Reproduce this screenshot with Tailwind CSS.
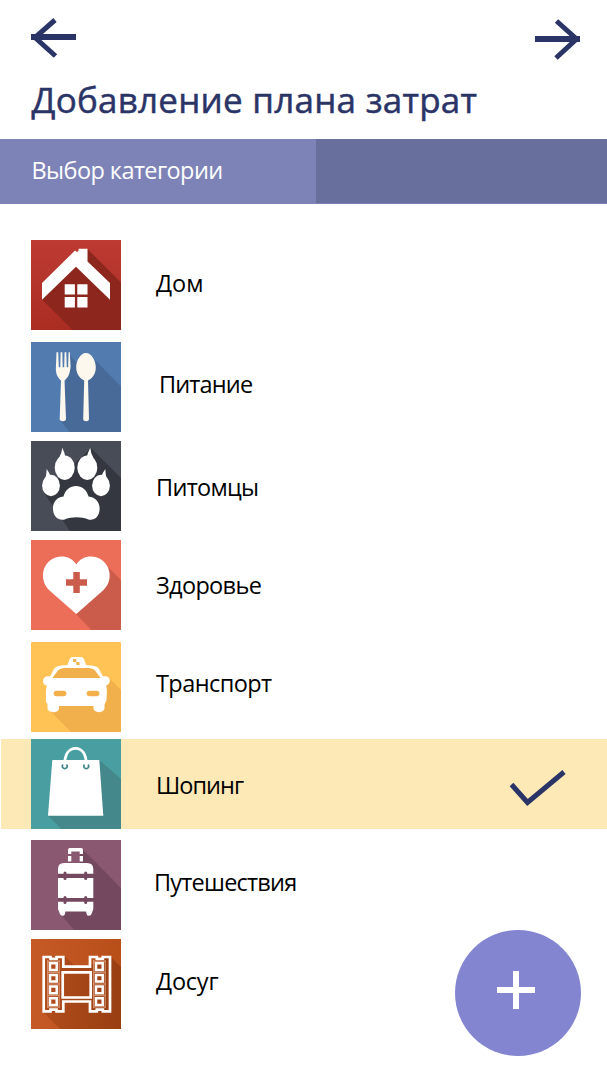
<!DOCTYPE html>
<html lang="ru">
<head>
<meta charset="utf-8">
<title>Добавление плана затрат</title>
<script src="https://cdn.jsdelivr.net/npm/@tailwindcss/browser@4"></script>
</head>
<body class="relative h-[1080px] w-[607px] overflow-hidden bg-white font-['Open_Sans','Noto_Sans',sans-serif] text-black">
<header class="flex h-[139px] flex-col">
  <div class="flex justify-between pl-[31px] pr-[27px] pt-[16px]">
    <svg class="h-12 w-[45px]" viewBox="0 0 45 48" fill="none" stroke="#2b3467"><path d="M0 21H45" stroke-width="6"/><path d="M24 4 4 21.500 24.500 40" stroke-width="5"/></svg>
    <svg class="h-12 w-[45px]" viewBox="0 0 45 48" fill="none" stroke="#2b3467"><path d="M0 23H45" stroke-width="6"/><path d="M21.500 5 41.500 23 21 42" stroke-width="5"/></svg>
  </div>
  <h1 class="pl-[31.5px] pt-[16px] text-[35px] leading-[40px] font-medium tracking-[0.24px] whitespace-nowrap text-[#2b3467] [-webkit-text-stroke:0.5px_#2b3467]">Добавление плана затрат</h1>
</header>
<div class="flex h-[65px] border-b border-[#7e83b7] bg-[#696f9c]">
  <div class="w-[316px] bg-[#7e83b7] pl-[31.5px] pt-[19px] text-[23.5px] leading-6 tracking-[-0.58px] whitespace-nowrap text-white">Выбор категории</div>
</div>
<main class="flex flex-col pt-9 text-[23.5px] leading-6 whitespace-nowrap">
  <div class="flex h-[90px] pl-[31px]">
    <svg class="size-[90px]" viewBox="0 0 90 90"><defs><linearGradient id="h" x2="0" y2="1"><stop stop-color="#bd3a32"/><stop offset="1" stop-color="#aa2d22"/></linearGradient></defs><path fill="url(#h)" d="M0 0H90V90H0z"/><path fill="#8d261d" d="M56.500 9 90 42.500V90H41.500L11 59.500z"/><path fill="#fff" d="M11 43 44 10.500 46 12 47.500 11V8.700H56.500V21.500L79 43V59.700L45 26.700 11 59.700z"/><path fill="#fff" d="M33.700 44.300h10.200v10.200H33.700zM46.300 44.300h10.200v10.200H46.300zM33.700 57h10.200v10.500H33.700zM46.300 57h10.200v10.500H46.300z"/></svg>
    <span class="pl-[35px] pt-[31px]">Дом</span>
  </div>
  <div class="mt-3 flex h-[90px] pl-[31px]">
    <svg class="size-[90px]" viewBox="0 0 90 90"><path fill="#527bb0" d="M0 0H90V90H0z"/><path fill="#476a98" d="M38.500 13 46 21 60 14 90 44.500V90H38.500L29 78z"/><g fill="#fdf8ee"><path d="M25.500 10.300h1.700l.6 15h1.500l.3-15h1.700l.4 15h1.500l.4-15h1.700l.4 15h1.400l.5-15h1.200l.8 14.500C38.800 31 38 35 33.500 38.500L35 77c0 3-6.300 3-6.300 0L30 38.500C26 35 24.600 31 24.900 25z"/><path d="M55 11c5.500 0 9.800 7.500 9.800 14.500 0 6-3.300 11-7.800 13L58 77c0 3-5.800 3-5.800 0L53.200 38.500C48.700 36.500 45.200 31.500 45.200 25.500 45.200 18.500 49.500 11 55 11z"/></g></svg>
    <span class="pl-[38px] pt-[30px] tracking-[-0.85px]">Питание</span>
  </div>
  <div class="mt-[9px] flex h-[90px] pl-[31px]">
    <svg class="size-[90px]" viewBox="0 0 90 90"><path fill="#484c57" d="M0 0H90V90H0z"/><path fill="#34373f" d="M60 7 90 37V90H38.500L13 52z"/><path fill="#484c57" d="M13 52 39 90H30L10 60z"/><g fill="#fff"><ellipse cx="33.700" cy="26.700" rx="10" ry="12.200"/><ellipse cx="56.300" cy="26.700" rx="10" ry="12.200"/><ellipse cx="20" cy="44.500" rx="8.900" ry="10.700"/><ellipse cx="70" cy="44.500" rx="8.900" ry="10.700"/><path d="M31.300 6.700Q34 12 34.500 17H28Q30.800 12 31.300 6.700zM59.300 6.700Q56.500 12 55.500 17H62.500Q59.500 12 59.300 6.700zM15.700 28Q18.500 32 20 36L14 39Q15.700 33 15.700 28zM74.300 28Q71.500 32 70 36L76 39Q74.300 33 74.300 28z"/><path d="M45 45C50.500 45 56 49 57.500 55.500 65 56 69 62 68.600 68.500 68.200 75.500 64 79.500 58 78.700 50 75.500 41 75.500 33 78.700 27 79.500 22.500 75.500 22 68.500 21.600 62 25 56 32.500 55.500 34 49 39.500 45 45 45z"/></g></svg>
    <span class="pl-[35px] pt-[34px] tracking-[-0.7px]">Питомцы</span>
  </div>
  <div class="mt-[9px] flex h-[90px] pl-[31px]">
    <svg class="size-[90px]" viewBox="0 0 90 90"><path fill="#ec6d58" d="M0 0H90V90H0z"/><path fill="#cb5c4b" d="M77 27 90 40V90H60.500L45 74z"/><path fill="#fff" d="M45.300 24.500C51 15 64 14.500 71.500 20.500 80.500 27.500 81.500 42 72 50.500L45.300 74 18.500 50.500C9.500 42 10 27.500 19 20.500 27 14.500 39.500 15 45.300 24.500z"/><path fill="#cb5c4b" d="M42.300 32h6.500v7.300H56v6.500H48.800V53H42.300V45.800H35V39.300h7.300z"/></svg>
    <span class="pl-[35px] pt-[33px] tracking-[-0.65px]">Здоровье</span>
  </div>
  <div class="mt-3 flex h-[90px] pl-[31px]">
    <svg class="size-[90px]" viewBox="0 0 90 90"><path fill="#fec255" d="M0 0H90V90H0z"/><path fill="#f1b04b" d="M78 36 90 48V90H40L19 69z"/><path fill="#fff" d="M36.500 23C38.500 17 39 15 42 15h7.500c3 0 3.800 2 5.500 8 8 .3 11.500 1.500 13 4l4 7.500c3-.8 6.800.5 6.800 4S76 43.500 75 43.500c1.500 3 .8 10 .5 14.500 0 2-2 3-2 5v3c0 5.500-11 5.500-11 0V64H28v2.500c0 5-11.500 5-11.500-.5V62c-1.500-1-1.500-3-1.500-5 0-5-.5-10 1-13.500-2.500 0-4-2-4-4.500 0-3.500 3.500-5.300 7-4.500l4-7.500C25 24.300 29 23.300 36.500 23z"/><path fill="#f1b04b" d="M21.300 36 27 28.500Q29 26 34 26H57Q62 26 64 28.500L69.700 36z"/><rect x="22.700" y="48.700" width="12.700" height="5.600" rx="2.800" fill="#f1b04b"/><rect x="55.700" y="48.700" width="12.700" height="5.600" rx="2.800" fill="#f1b04b"/><path fill="#f1b04b" d="M42 17h3.300v3H48.500v3H45.300v-3H42z"/></svg>
    <span class="pl-[35px] pt-[29px] tracking-[-0.57px]">Транспорт</span>
  </div>
  <div class="mt-[7px] ml-px flex h-[90px] bg-[#fce9b6] pl-[30px]">
    <svg class="size-[90px]" viewBox="0 0 90 90"><path fill="#499ea1" d="M0 0H90V90H0z"/><path fill="#45888b" d="M68.300 21 90 40V90H30.500L17 76.700z"/><path fill="#fff" d="M21.300 21H68.300L72.300 76.700H17z"/><path fill="none" stroke="#fff" stroke-width="2.800" d="M33.600 25C34 15 38 9.300 44.500 9.300S55 15 55.400 25"/><path fill="none" stroke="#45888b" stroke-width="1.600" d="M32 25.500a2.400 2.400 0 1 0 3.500 0M53.500 25.500a2.400 2.400 0 1 0 3.500 0"/></svg>
    <span class="pl-[35px] pt-[34px] tracking-[-0.95px]">Шопинг</span>
    <svg class="mr-[41px] ml-auto mt-[29px] h-10 w-[58px]" viewBox="0 0 58 40" fill="none" stroke="#2b3467" stroke-width="5"><path d="M3.500 16.500 19.500 34.500 56 4"/></svg>
  </div>
  <div class="mt-[11px] flex h-[90px] pl-[31px]">
    <svg class="size-[90px]" viewBox="0 0 90 90"><path fill="#8a5871" d="M0 0H90V90H0z"/><path fill="#74495f" d="M51.500 9 90 48V90H43L31 76 27 60V34z"/><path fill="#8a5871" d="M40 11H49V23H40z"/><g fill="#fff"><path d="M37 14V10q0-2 2-2H50q2 0 2 2v4H48.700V11.500H40.300V14zM37 16h3.300v5.500H37zM48.700 16H52v5.500H48.700z"/><path d="M27 33.700V29q0-6 6-6H56q6.300 0 6.300 6v4.700zM27 38H62.300V58H27zM27 61.700H62.300V69L60.500 74q-.5 1.700-2.500 1.700t-2.300-1.500L55 71.500H34.500L33.800 74.200q-.3 1.500-2.300 1.500T29 74L27 69z"/></g><g fill="#74495f"><rect x="32.500" y="31.500" width="3" height="8.500" rx="1.500"/><rect x="53.200" y="31.500" width="3" height="8.500" rx="1.500"/><rect x="32.500" y="56" width="3" height="8" rx="1.500"/><rect x="53.200" y="56" width="3" height="8" rx="1.500"/></g></svg>
    <span class="pl-[33px] pt-[30px] tracking-[-0.78px]">Путешествия</span>
  </div>
  <div class="mt-[9px] flex h-[90px] pl-[31px]">
    <svg class="size-[90px]" viewBox="0 0 90 90">
      <defs>
        <linearGradient id="f" x2="1" y2="0"><stop stop-color="#c55a27"/><stop offset="1" stop-color="#b84e18"/></linearGradient>
        <linearGradient id="s" x2="1" y2="0"><stop stop-color="#b14c1c"/><stop offset="1" stop-color="#983f12"/></linearGradient>
        <g id="strip">
          <path fill="none" stroke="#e6b398" stroke-width=".8" d="M16.700 21V69M28.200 21V69M16.700 22.300H28.200M16.700 33.300H28.200M16.700 45H28.200M16.700 56.700H28.200M16.700 68H28.200"/>
          <path fill="none" stroke="#fff" stroke-width="2.500" d="M19 24.200h6.700v6.700H19zM19 35.900h6.700v6.700H19zM19 47.500h6.700v6.700H19zM19 59.200h6.700v6.700H19z"/>
        </g>
      </defs>
      <path fill="url(#f)" d="M0 0H90V90H0z"/>
      <path fill="url(#s)" d="M33.500 17 43.500 27H58L79 17 90 28V90H29L12 73V18z"/>
      <path fill="none" stroke="#fff" stroke-width="2.700" d="M12.700 18H19.500V19.800H25.500V18H32.300V27.700H59V18H65.800V19.800H71.800V18H79V72.400H71.800V70.600H65.800V72.400H59V62.500H32.300V72.400H25.500V70.600H19.500V72.400H12.700zM31.700 33.400H59.700V58.500H31.700z"/>
      <use href="#strip"/><use href="#strip" x="46"/>
    </svg>
    <span class="pl-[35px] pt-[30px] tracking-[-0.2px]">Досуг</span>
  </div>
</main>
<button class="absolute top-[930px] left-[455px] size-[126px] rounded-full bg-[#8385d1]" aria-label="Добавить">
  <svg class="size-[126px]" viewBox="0 0 126 126" fill="#fff"><path d="M58 41h6v16h16v6H64v16H58V63H42V57H58z"/></svg>
</button>
</body>
</html>
